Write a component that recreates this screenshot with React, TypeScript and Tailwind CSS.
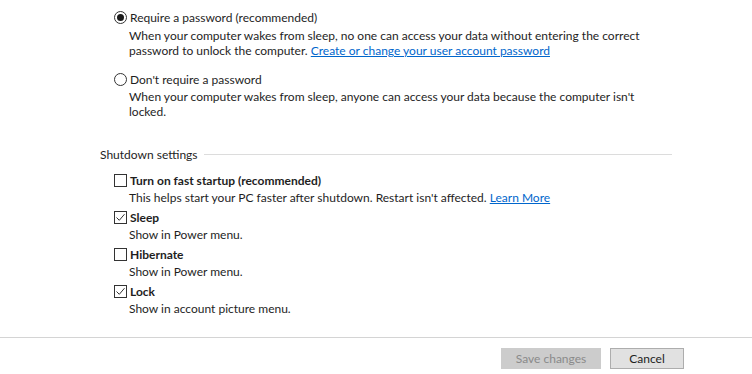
import React from "react";

function Radio({ checked }: { checked?: boolean }) {
  return (
    <span className="w-[13px] h-[13px] rounded-full border border-[#333] flex items-center justify-center shrink-0 bg-white">
      {checked && <span className="w-[7px] h-[7px] rounded-full bg-[#1a1a1a]" />}
    </span>
  );
}

function Check({ checked }: { checked?: boolean }) {
  return (
    <span className="w-[13px] h-[13px] border border-[#333] flex items-center justify-center shrink-0 bg-white">
      {checked && (
        <svg width="11" height="11" viewBox="0 0 11 11" fill="none">
          <path d="M1.5 5.5 L4.3 8.3 L9.5 2.2" stroke="#333" strokeWidth="1" />
        </svg>
      )}
    </span>
  );
}

const options = [
  { title: "Turn on fast startup (recommended)", desc: "This helps start your PC faster after shutdown. Restart isn't affected.", link: "Learn More", checked: false },
  { title: "Sleep", desc: "Show in Power menu.", checked: true },
  { title: "Hibernate", desc: "Show in Power menu.", checked: false },
  { title: "Lock", desc: "Show in account picture menu.", checked: true },
];

export default function App() {
  return (
    <div className="w-[752px] h-[374px] bg-white text-[#1e1e1e] text-[12px] leading-[15px] font-['Lato',sans-serif] flex flex-col overflow-hidden">
      <div className="pl-[114px] pt-[9px] flex flex-col">
        <div className="flex items-center gap-[3px] h-[16px]">
          <Radio checked />
          <span>Require a password (recommended)</span>
        </div>
        <div className="pl-[15px] mt-[3px] whitespace-nowrap">
          When your computer wakes from sleep, no one can access your data without entering the correct
          <br />
          password to unlock the computer.{" "}
          <a className="text-[#0066cc] underline">Create or change your user account password</a>
        </div>

        <div className="flex items-center gap-[3px] h-[16px] mt-[13px]">
          <Radio />
          <span>Don't require a password</span>
        </div>
        <div className="pl-[15px] mt-[2px] whitespace-nowrap">
          When your computer wakes from sleep, anyone can access your data because the computer isn't
          <br />
          locked.
        </div>
      </div>

      <div className="ml-[100px] w-[572px] mt-[28px] flex items-center gap-[6px]">
        <span className="shrink-0">Shutdown settings</span>
        <div className="h-px bg-[#dcdcdc] flex-1" />
      </div>

      <div className="pl-[114px] pt-[10px] flex flex-col gap-[4px]">
        {options.map((o) => (
          <div key={o.title} className="flex flex-col">
            <div className="flex items-center gap-[3px] h-[16px]">
              <Check checked={o.checked} />
              <span className="font-bold">{o.title}</span>
            </div>
            <div className="pl-[15px] mt-[2px]">
              {o.desc}
              {o.link && (
                <>
                  {" "}
                  <a className="text-[#0066cc] underline">{o.link}</a>
                </>
              )}
            </div>
          </div>
        ))}
      </div>

      <div className="mt-auto border-t border-[#d4d4d4] h-[37px] flex items-start justify-end pr-[68px] pt-[10px] gap-[9px]">
        <button className="w-[100px] h-[21px] bg-[#cccccc] border border-[#cccccc] text-[#8a8a8a]">Save changes</button>
        <button className="w-[74px] h-[21px] bg-[#e1e1e1] border border-[#adadad] text-[#1e1e1e]">Cancel</button>
      </div>
    </div>
  );
}
